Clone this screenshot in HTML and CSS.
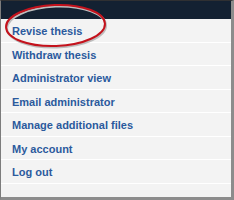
FILE: index.html
```html
<!DOCTYPE html>
<html>
<head>
<meta charset="utf-8">
<link rel="stylesheet" href="styles.css">
</head>
<body>
<div class="frame">
  <div class="header"></div>
  <ul class="menu">
    <li><a href="#">Revise thesis</a></li>
    <li><a href="#">Withdraw thesis</a></li>
    <li><a href="#">Administrator view</a></li>
    <li><a href="#">Email administrator</a></li>
    <li><a href="#">Manage additional files</a></li>
    <li><a href="#">My account</a></li>
    <li><a href="#">Log out</a></li>
  </ul>
  <svg class="circle" width="120" height="56" viewBox="0 0 120 56">
    <ellipse cx="56.5" cy="27" rx="49.5" ry="20.5" transform="rotate(-2 56.5 27)" fill="none" stroke="#bdbdbd" stroke-width="2"/>
    <ellipse cx="55.5" cy="25.5" rx="49.5" ry="20.5" transform="rotate(-2 55.5 25.5)" fill="none" stroke="#c4121c" stroke-width="2"/>
  </svg>
</div>
</body>
</html>
```
FILE: styles.css
```css
html, body {
  margin: 0;
  padding: 0;
  background: #ffffff;
}
.frame {
  position: relative;
  width: 234px;
  height: 200px;
  box-sizing: border-box;
  border-top: 1px solid #2f3032;
  border-left: 1px solid #7c7c7c;
  border-right: 3px solid #8c8c8c;
  border-bottom: 3px solid #8c8c8c;
  background: #f3f3f3;
  overflow: hidden;
  font-family: "Liberation Sans", Arial, sans-serif;
}
.header {
  height: 18px;
  background: #132132;
}
.menu {
  list-style: none;
  margin: 0;
  padding: 0;
}
.menu li {
  height: 22.5px;
  line-height: 22.5px;
  border-bottom: 1px solid #ffffff;
  padding-left: 11px;
  white-space: nowrap;
}
.menu a {
  color: #2b5a9d;
  font-size: 11px;
  font-weight: bold;
  text-decoration: none;
}
.circle {
  position: absolute;
  left: -1px;
  top: -1px;
}
```
